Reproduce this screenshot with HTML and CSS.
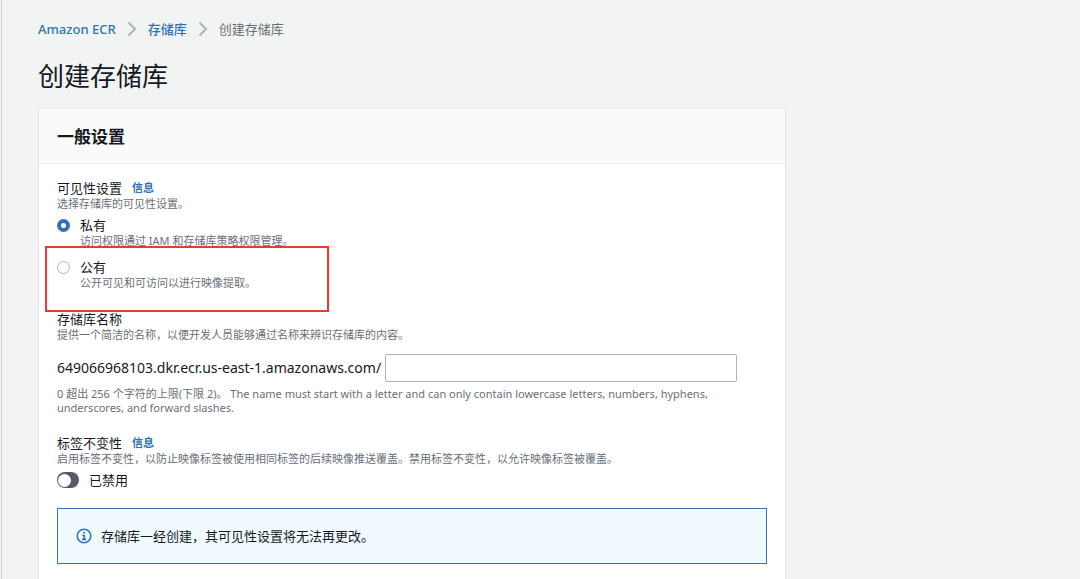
FILE: index.html
```html
<!DOCTYPE html>
<html lang="zh-CN">
<head>
  <meta charset="UTF-8" />
  <meta name="viewport" content="width=device-width, initial-scale=1.0" />
  <title>创建存储库</title>
  <link rel="stylesheet" href="styles.css">
</head>
<body>
  <main class="page">
    <nav class="breadcrumb">
      <a href="#">Amazon ECR</a>
      <svg class="chevron" viewBox="0 0 10 16"><path d="M1.5 1.5 8 8l-6.500 6.500" /></svg>
      <a href="#">存储库</a>
      <svg class="chevron" viewBox="0 0 10 16"><path d="M1.5 1.5 8 8l-6.500 6.500" /></svg>
      <span>创建存储库</span>
    </nav>

    <h1>创建存储库</h1>

    <section class="card">
      <header class="card-header">
        <h2>一般设置</h2>
      </header>

      <form class="card-body">
        <!-- Visibility -->
        <div class="field" role="radiogroup" aria-labelledby="visibility-label">
          <div class="label-row">
            <span id="visibility-label">可见性设置</span>
            <a class="info" href="#">信息</a>
          </div>
          <p class="hint">选择存储库的可见性设置。</p>
          <div class="options">
            <div class="option">
              <input type="radio" name="visibility" id="private" checked>
              <div>
                <label for="private">私有</label>
                <p class="hint">访问权限通过 IAM 和存储库策略权限管理。</p>
              </div>
            </div>
            <div class="option marked">
              <input type="radio" name="visibility" id="public">
              <div>
                <label for="public">公有</label>
                <p class="hint">公开可见和可访问以进行映像提取。</p>
              </div>
            </div>
          </div>
        </div>

        <!-- Repository name -->
        <div class="field">
          <label for="repo-name">存储库名称</label>
          <p class="hint">提供一个简洁的名称，以便开发人员能够通过名称来辨识存储库的内容。</p>
          <div class="name-row">
            <span class="registry">649066968103.dkr.ecr.us-east-1.amazonaws.com/</span>
            <input type="text" id="repo-name">
          </div>
          <p class="hint constraint">0 超出 256 个字符的上限(下限 2)。 The name must start with a letter and can only contain lowercase letters, numbers, hyphens, underscores, and forward slashes.</p>
        </div>

        <!-- Tag immutability -->
        <div class="field">
          <div class="label-row">
            <span>标签不变性</span>
            <a class="info" href="#">信息</a>
          </div>
          <p class="hint">启用标签不变性，以防止映像标签被使用相同标签的后续映像推送覆盖。禁用标签不变性，以允许映像标签被覆盖。</p>
          <div class="toggle-row">
            <input type="checkbox" role="switch" id="immutable">
            <label for="immutable">已禁用</label>
          </div>
        </div>

        <div class="alert">
          <svg class="alert-icon" viewBox="0 0 16 16">
            <circle cx="8" cy="8" r="6.800" />
            <path d="M6.300 7.500H8.300V11.300M6 11.400h4.200" />
            <path d="M7.200 4.800h1.800" />
          </svg>
          <span>存储库一经创建，其可见性设置将无法再更改。</span>
        </div>
      </form>
    </section>
  </main>
</body>
</html>
```
FILE: styles.css
```css
*, *::before, *::after {
  box-sizing: border-box;
}

body {
  margin: 0;
  background-color: #f2f3f3;
  color: #16191f;
  font-family: "Noto Sans", "Noto Sans CJK SC", sans-serif;
  font-size: 13px;
  line-height: 16px;
}

h1, h2, p {
  margin: 0;
}

a {
  color: #2e73b8;
  text-decoration: none;
}

a:hover {
  text-decoration: underline;
}

label {
  display: block;
}

.page {
  display: flex;
  flex-direction: column;
  min-height: 100vh;
  margin-left: 1px;
  padding: 21px 36px 0;
  border-left: 1px solid #d0d5d5;
}

.breadcrumb {
  display: flex;
  align-items: center;
  gap: 11px;
  color: #687078;
}

.breadcrumb a {
  font-weight: 500;
}

.chevron {
  width: 10px;
  height: 16px;
  fill: none;
  stroke: #aab7b8;
  stroke-width: 2;
}

h1 {
  margin: 23px 0 16px;
  font-size: 26px;
  font-weight: 400;
  line-height: 32px;
}

.card {
  flex: 1;
  max-width: 748px;
  background-color: #fff;
  border: 1px solid #dfe3e3;
  border-top-color: #eaeded;
  border-bottom: none;
}

.card-header {
  padding: 17px 18px 15px;
  background-color: #fafafa;
  border-bottom: 1px solid #eaeded;
}

h2 {
  font-size: 17px;
  font-weight: 700;
  line-height: 22px;
}

.card-body {
  display: flex;
  flex-direction: column;
  gap: 20px;
  padding: 16px 18px;
}

.label-row {
  display: flex;
  gap: 10px;
}

.info {
  font-size: 11px;
  font-weight: 700;
}

.hint {
  color: #687078;
  font-size: 11px;
}

.options {
  display: flex;
  flex-direction: column;
  gap: 10px;
  margin-top: 5px;
}

.option {
  display: flex;
  gap: 10px;
}

.marked {
  position: relative;
}

.marked::after {
  content: "";
  position: absolute;
  top: -13px;
  left: -12px;
  width: 284px;
  height: 66px;
  border: 2px solid #e93a2e;
  pointer-events: none;
}

input[type="radio"] {
  appearance: none;
  width: 13px;
  height: 13px;
  margin: 2px 0 0;
  background-color: #fff;
  border: 1px solid #aab7b8;
  border-radius: 50%;
}

input[type="radio"]:checked {
  border: 4px solid #2e73b8;
}

.name-row {
  display: flex;
  align-items: center;
  gap: 4px;
  margin-top: 11px;
  padding-right: 30px;
}

.registry {
  font-size: 14px;
}

.name-row input {
  flex: 1;
  min-width: 0;
  height: 28px;
  padding: 4px 8px;
  border: 1px solid #aab7b8;
  border-radius: 2px;
  font: inherit;
}

.constraint {
  margin-top: 5px;
  padding-right: 30px;
  line-height: 14px;
}

.toggle-row {
  display: flex;
  gap: 10px;
  margin-top: 5px;
}

.toggle-row input {
  appearance: none;
  display: flex;
  align-items: center;
  width: 22px;
  height: 16px;
  margin: 0;
  padding: 1px;
  background-color: #545b64;
  border-radius: 8px;
}

.toggle-row input::before {
  content: "";
  width: 13px;
  height: 13px;
  background-color: #fff;
  border-radius: 50%;
}

.toggle-row input:checked {
  justify-content: flex-end;
  background-color: #2e73b8;
}

.alert {
  display: flex;
  align-items: center;
  gap: 9px;
  padding: 19px 18px;
  background-color: #f1faff;
  border: 1px solid #2e73b8;
}

.alert-icon {
  width: 16px;
  height: 16px;
  fill: none;
  stroke: #2e73b8;
  stroke-width: 1.6;
}
```
